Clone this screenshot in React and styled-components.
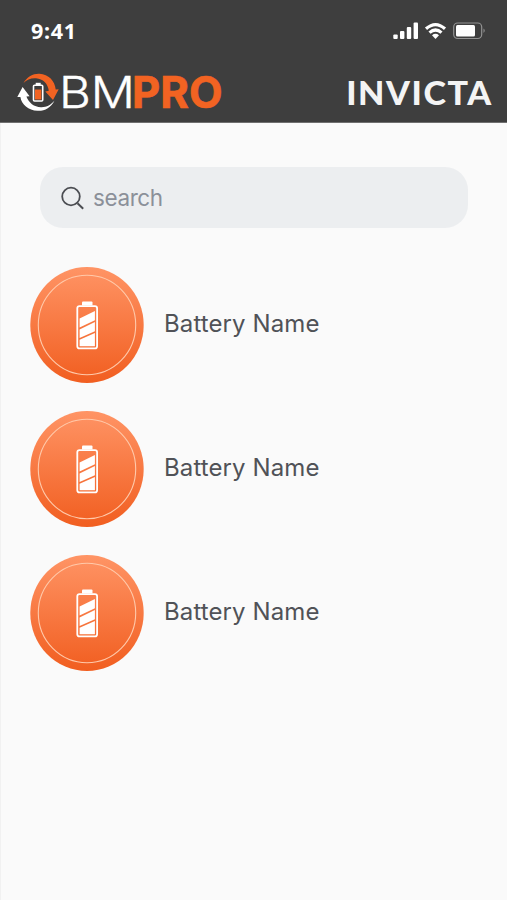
import React from "react";
import styled, { createGlobalStyle } from "styled-components";

const GlobalStyle = createGlobalStyle`
  * {
    box-sizing: border-box;
  }
  body {
    margin: 0;
    background: #fafafa;
    font-family: Inter, sans-serif;
  }
`;

const Screen = styled.div`
  width: 100%;
  min-height: 100vh;
  background: #fafafa;
  border-left: 1px solid #f1f1f1;
`;

const Header = styled.header`
  height: 123px;
  margin-left: -1px;
  background: #3e3e3e;
  border-bottom: 1px solid #707070;
`;

const StatusBar = styled.div`
  height: 62px;
  padding: 0 21px 0 31px;
  display: flex;
  align-items: center;
  justify-content: space-between;
`;

const Clock = styled.div`
  color: #fff;
  font: 700 21.5px/30px "Noto Sans", sans-serif;
  letter-spacing: 0.7px;
`;

const StatusIcons = styled.svg`
  display: block;
  width: 93px;
  height: 20px;
`;

const BrandBar = styled.div`
  height: 60px;
  padding: 0 15px 0 17px;
  display: flex;
  align-items: center;
  justify-content: space-between;
`;

const Brand = styled.svg`
  display: block;
  width: ${(props) => props.$width}px;
  height: 60px;
`;

const SearchBox = styled.label`
  height: 61px;
  margin: 44px 39px 0;
  padding-left: 21px;
  border-radius: 23px;
  background: #eceef0;
  display: flex;
  align-items: center;
`;

const SearchIcon = styled.svg`
  width: 24px;
  height: 24px;
  margin-right: 8px;
  flex: none;
`;

const Placeholder = styled.span`
  color: #8b9099;
  font-size: 22.5px;
  line-height: 30px;
  letter-spacing: -0.4px;
`;

const List = styled.ul`
  margin: 39px 0 0;
  padding: 0 0 0 29px;
  list-style: none;
  display: flex;
  flex-direction: column;
  gap: 28px;
`;

const Row = styled.li`
  height: 116px;
  display: flex;
  align-items: center;
`;

const BatteryIcon = styled.svg`
  display: block;
  width: 114px;
  height: 116px;
  margin-right: 20px;
`;

const BatteryName = styled.span`
  color: #505257;
  font-size: 24px;
  line-height: 30px;
  letter-spacing: 0.1px;
  padding-bottom: 3px;
`;

const batteries = [
  { id: 1, name: "Battery Name" },
  { id: 2, name: "Battery Name" },
  { id: 3, name: "Battery Name" },
];

function Status() {
  return (
    <StatusIcons viewBox="393 21 93 20" fill="#fff">
      <rect x="393.3" y="34.5" width="4.4" height="4.5" rx="1" />
      <rect x="400" y="31" width="4.4" height="8" rx="1" />
      <rect x="406.8" y="27" width="4.4" height="12" rx="1" />
      <rect x="413.6" y="22.5" width="4.4" height="16.5" rx="1" />
      <g fill="none" stroke="#fff" strokeWidth="3.2">
        <path d="M426 28.8Q435.5 20.3 445 28.8" />
        <path d="M429.5 32.6Q435.5 27.4 441.5 32.6" />
      </g>
      <path d="M432 35.2Q435.5 32.4 439 35.2L435.5 39Z" />
      <rect
        x="453.7"
        y="23"
        width="28"
        height="15.5"
        rx="4"
        fill="none"
        stroke="#929292"
        strokeWidth="1.2"
      />
      <rect x="456" y="25" width="19" height="11.5" rx="1.5" />
      <path d="M483.5 28.5Q486 30.7 483.5 33Z" fill="#929292" />
    </StatusIcons>
  );
}

function BmproLogo() {
  return (
    <Brand $width={207} viewBox="17 62 207 60">
      <path
        d="M23.5 83C27.5 76.5 33.5 73.4 39.5 73.8C48.5 74.3 55 81 55.7 89.6L58.7 89.3L53 100L45.3 91.6L48.8 90.7C48 83.8 43 78.9 36 78.3C31 77.9 26.8 79.8 23.5 83Z"
        fill="#f26322"
      />
      <path
        d="M22.6 87L29.6 96.3L26.4 96.5C28.8 102.8 34 107 41 107.2C46.5 107.4 51 104.8 54.5 100.5C51 107.8 44.5 111.2 37.5 110.8C28.5 110.3 21.4 104.5 20.4 96.9L17.3 97Z"
        fill="#fff"
      />
      <rect
        x="33.5"
        y="85.3"
        width="9.2"
        height="15.7"
        rx="1"
        fill="none"
        stroke="#fff"
        strokeWidth="1.6"
      />
      <rect x="35.7" y="82.8" width="5" height="2.7" fill="#fff" />
      <rect x="35" y="89.5" width="6.3" height="10" fill="#f26322" />
      <text
        x="59"
        y="108"
        fill="#fff"
        fontFamily="Inter, sans-serif"
        fontWeight="300"
        fontSize="44"
        textLength="76"
        lengthAdjust="spacingAndGlyphs"
        stroke="#fff"
        strokeWidth="0.4"
      >
        BM
      </text>
      <text
        x="132"
        y="108"
        fill="#f26322"
        stroke="#f26322"
        strokeWidth="0.7"
        fontFamily="Inter, sans-serif"
        fontWeight="700"
        fontSize="43.5"
        textLength="90.5"
        lengthAdjust="spacingAndGlyphs"
      >
        PRO
      </text>
    </Brand>
  );
}

function InvictaLogo() {
  return (
    <Brand $width={147} viewBox="345 62 147 60">
      <text
        x="346.2"
        y="104.5"
        fill="#f4f4f4"
        fontFamily="Lato, sans-serif"
        fontWeight="900"
        fontSize="32.5"
        letterSpacing="1.5"
        textLength="146.5"
        lengthAdjust="spacingAndGlyphs"
      >
        INVICTA
      </text>
    </Brand>
  );
}

function BatteryBadge({ id }) {
  return (
    <BatteryIcon viewBox="0 0 114 116">
      <defs>
        <linearGradient id={`badge-${id}`} x1="0" y1="0" x2="0" y2="1">
          <stop offset="0" stopColor="#ff9465" />
          <stop offset="1" stopColor="#f15e20" />
        </linearGradient>
      </defs>
      <ellipse cx="57" cy="58" rx="56.7" ry="58" fill={`url(#badge-${id})`} />
      <ellipse
        cx="57"
        cy="58"
        rx="48.7"
        ry="49.7"
        fill="none"
        stroke="#ffc9aa"
        strokeWidth="1.1"
      />
      <rect
        x="47.3"
        y="39.1"
        width="19.8"
        height="42.3"
        rx="2.2"
        fill="none"
        stroke="#fff"
        strokeWidth="1.8"
      />
      <path d="M52 38.5V35.5Q52 34.5 53 34.5H61.5Q62.5 34.5 62.5 35.5V38.5Z" fill="#fff" />
      <path
        d="M49.6 51.5L64.9 44V53.2L49.6 60.6ZM49.6 62.4L64.9 55V64.2L49.6 71ZM49.6 72.8L64.9 66V79.2H49.6Z"
        fill="#fff"
      />
    </BatteryIcon>
  );
}

export default function App() {
  return (
    <>
      <GlobalStyle />
      <Screen>
        <Header>
          <StatusBar>
            <Clock>9:41</Clock>
            <Status />
          </StatusBar>
          <BrandBar>
            <BmproLogo />
            <InvictaLogo />
          </BrandBar>
        </Header>
        <SearchBox>
          <SearchIcon viewBox="0 0 24 24" fill="none" stroke="#4b4d52">
            <circle cx="10" cy="10.5" r="8.8" strokeWidth="1.8" />
            <path d="M16.5 17.2L22.2 22.7" strokeWidth="2" />
          </SearchIcon>
          <Placeholder>search</Placeholder>
        </SearchBox>
        <List>
          {batteries.map((battery) => (
            <Row key={battery.id}>
              <BatteryBadge id={battery.id} />
              <BatteryName>{battery.name}</BatteryName>
            </Row>
          ))}
        </List>
      </Screen>
    </>
  );
}
